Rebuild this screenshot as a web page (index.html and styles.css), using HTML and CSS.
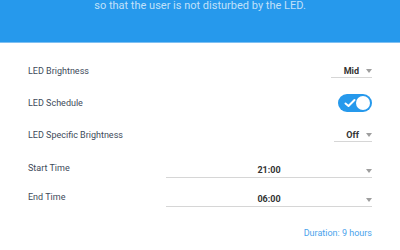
FILE: index.html
```html
<html>
<head>
<link rel="stylesheet" href="styles.css">
</head>
<body>
<div class="page">
  <header class="hero">
    <p class="hero__text">so that the user is not disturbed by the LED.</p>
  </header>

  <div class="settings">
    <div class="row">
      <span class="row__label">LED Brightness</span>
      <div class="select select--small">
        <span class="select__value">Mid</span>
        <span class="select__arrow"></span>
      </div>
    </div>
    <div class="row">
      <span class="row__label">LED Schedule</span>
      <div class="toggle">
        <svg class="toggle__check" width="12" height="10" viewBox="0 0 12 10" fill="none" stroke="#fff" stroke-width="2" stroke-linecap="round" stroke-linejoin="round"><path d="M1.5 5.5l3 2.5 6-6"/></svg>
        <span class="toggle__knob"></span>
      </div>
    </div>
    <div class="row">
      <span class="row__label">LED Specific Brightness</span>
      <div class="select select--small select--off">
        <span class="select__value">Off</span>
        <span class="select__arrow"></span>
      </div>
    </div>
    <div class="row row--time">
      <span class="row__label">Start Time</span>
      <div class="select select--wide">
        <span class="select__value">21:00</span>
        <span class="select__arrow"></span>
      </div>
    </div>
    <div class="row row--time">
      <span class="row__label">End Time</span>
      <div class="select select--wide">
        <span class="select__value">06:00</span>
        <span class="select__arrow"></span>
      </div>
    </div>
    <div class="duration">Duration: 9 hours</div>
  </div>
</div>
</body>
</html>
```

FILE: styles.css
```css
/* reset */
* {
  padding: 0;
  margin: 0;
  box-sizing: border-box;
}

body {
  background-color: #fff;
  font-family: Roboto, "Liberation Sans", sans-serif;
  width: 400px;
  height: 250px;
  overflow: hidden;
}

.hero {
  height: 43px;
  background-color: #2699ec;
  border-bottom: 1px solid #7fc0f2;
  overflow: hidden;
}

.hero__text {
  margin-top: -1px;
  line-height: 13px;
  font-size: 11px;
  text-align: center;
  color: rgba(255, 255, 255, 0.72);
}

.settings {
  padding: 12px 28px 0;
}

.row {
  height: 32px;
  display: flex;
  align-items: center;
  justify-content: space-between;
}

.row--time {
  height: 29px;
}

.row:nth-child(4) {
  margin-top: 2px;
}

.row__label {
  font-size: 9px;
  color: #3e4a5a;
}

.select {
  display: flex;
  align-items: center;
  height: 14px;
  border-bottom: 1px solid #d6d6d6;
  font-size: 9px;
  font-weight: 700;
  color: #333;
}

.select--small {
  width: 41px;
  justify-content: flex-end;
}

.select--off {
  width: 38px;
}

.select--small .select__value {
  margin-right: 7px;
}

.select--wide {
  width: 206px;
  position: relative;
  justify-content: center;
  margin-top: 6px;
}

.select--wide .select__arrow {
  position: absolute;
  right: 0;
  top: 5px;
}

.select__arrow {
  width: 0;
  height: 0;
  border-left: 3px solid transparent;
  border-right: 3px solid transparent;
  border-top: 4px solid #9e9e9e;
}

.toggle {
  width: 34px;
  height: 18px;
  border-radius: 9px;
  background-color: #2699ec;
  display: flex;
  align-items: center;
  justify-content: space-between;
  padding: 0 2px 0 6px;
}

.toggle__knob {
  width: 14px;
  height: 14px;
  border-radius: 50%;
  background-color: #fff;
}

.duration {
  margin-top: 17px;
  text-align: right;
  font-size: 9px;
  color: #4aa3ec;
}
```
